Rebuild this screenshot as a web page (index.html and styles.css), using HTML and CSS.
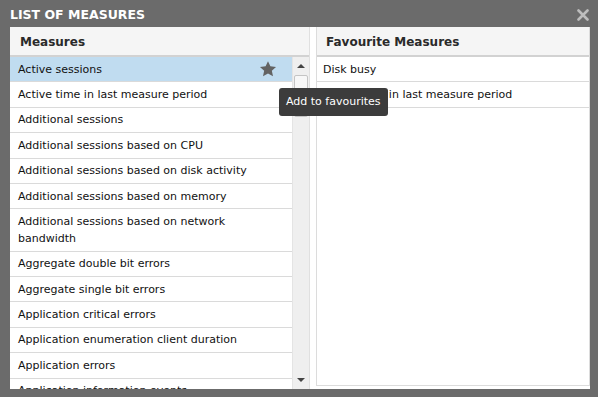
FILE: index.html
```html
<!DOCTYPE html>
<html lang="en">
<head>
    <meta charset="UTF-8">
    <title>List of measures</title>
    <link rel="stylesheet" href="styles.css">
</head>
<body>
    <div class="dialog">
        <div class="title-bar">
            <span class="title">LIST OF MEASURES</span>
            <svg class="close" viewBox="0 0 12 12" width="12" height="12"><path d="M1.5 1.5l9 9M10.5 1.5l-9 9" stroke="#bdbdbd" stroke-width="2.6" stroke-linecap="round"/></svg>
        </div>
        <div class="content">
            <div class="column left">
                <div class="col-header">Measures</div>
                <div class="list-wrap">
                    <ul class="list">
                        <li class="selected">Active sessions
                            <svg class="star" viewBox="0 0 24 24" width="18" height="18"><path d="M12 1.5l3.2 6.9 7.5.8-5.6 5.1 1.6 7.4L12 17.9l-6.7 3.8 1.6-7.4-5.6-5.1 7.5-.8z" fill="#636363"/></svg>
                        </li>
                        <li>Active time in last measure period</li>
                        <li>Additional sessions</li>
                        <li>Additional sessions based on CPU</li>
                        <li>Additional sessions based on disk activity</li>
                        <li>Additional sessions based on memory</li>
                        <li>Additional sessions based on network bandwidth</li>
                        <li>Aggregate double bit errors</li>
                        <li>Aggregate single bit errors</li>
                        <li>Application critical errors</li>
                        <li>Application enumeration client duration</li>
                        <li>Application errors</li>
                        <li>Application information events</li>
                    </ul>
                    <div class="scrollbar">
                        <div class="arrow up"></div>
                        <div class="thumb"></div>
                        <div class="track"></div>
                        <div class="arrow down"></div>
                    </div>
                </div>
            </div>
            <div class="column right">
                <div class="col-header">Favourite Measures</div>
                <ul class="list">
                    <li>Disk busy</li>
                    <li>Active time in last measure period</li>
                </ul>
            </div>
            <div class="tooltip">Add to favourites</div>
        </div>
    </div>
</body>
</html>
```

FILE: styles.css
```css
body {
    margin: 0;
    background-color: #6b6b6b;
    font-family: "DejaVu Sans", Verdana, sans-serif;
    font-size: 11px;
    color: #111;
}
.dialog {
    padding: 0 8px 8px 10px;
}
.title-bar {
    height: 27px;
    display: flex;
    align-items: center;
    justify-content: space-between;
}
.title {
    color: #fff;
    font-size: 12.5px;
    font-weight: bold;
    margin-top: 2px;
}
.close {
    margin-right: 1px;
    margin-top: 3px;
}
.content {
    position: relative;
    background-color: #fff;
    height: 362px;
    display: flex;
}
.column {
    display: flex;
    flex-direction: column;
}
.left {
    width: 299px;
    border-right: 1px solid #e0e0e0;
}
.right {
    flex: 1;
    margin-left: 6px;
    border: 1px solid #dcdcdc;
    border-top: none;
    margin-bottom: 3px;
}
.col-header {
    height: 28px;
    line-height: 30px;
    background-color: #f5f5f5;
    border-bottom: 2px solid #d2d2d2;
    font-size: 12px;
    font-weight: bold;
    color: #2a2a2a;
    padding-left: 10px;
}
.right .col-header {
    padding-left: 9px;
}
.list-wrap {
    flex: 1;
    display: flex;
    overflow: hidden;
}
.list {
    list-style: none;
    margin: 0;
    padding: 0;
}
.left .list {
    width: 282px;
}
.list li {
    position: relative;
    padding: 3.7px 30px 3.7px 8px;
    line-height: 17px;
    border-bottom: 1px solid #dadada;
}
.right .list li {
    padding-left: 6px;
}
.list li.selected {
    background-color: #c0dcf0;
}
.star {
    position: absolute;
    right: 15px;
    top: 3px;
}
.scrollbar {
    width: 16px;
    background-color: #efefef;
    border-left: 1px solid #e4e4e4;
    display: flex;
    flex-direction: column;
}
.arrow {
    height: 18px;
    position: relative;
}
.arrow::after {
    content: "";
    position: absolute;
    left: 4px;
    border-left: 4px solid transparent;
    border-right: 4px solid transparent;
}
.arrow.up::after {
    top: 7px;
    border-bottom: 4px solid #444;
}
.arrow.down::after {
    top: 7px;
    border-top: 4px solid #444;
}
.thumb {
    height: 40px;
    margin: 0 1px;
    background-color: #f7f7f7;
    border: 1px solid #c4c4c4;
    border-radius: 2px;
}
.track {
    flex: 1;
}
.tooltip {
    position: absolute;
    left: 269px;
    top: 61px;
    background-color: #3c3c3c;
    color: #fff;
    padding: 7px 7px;
    border-radius: 3px;
    font-size: 11px;
    line-height: 14px;
}
```
